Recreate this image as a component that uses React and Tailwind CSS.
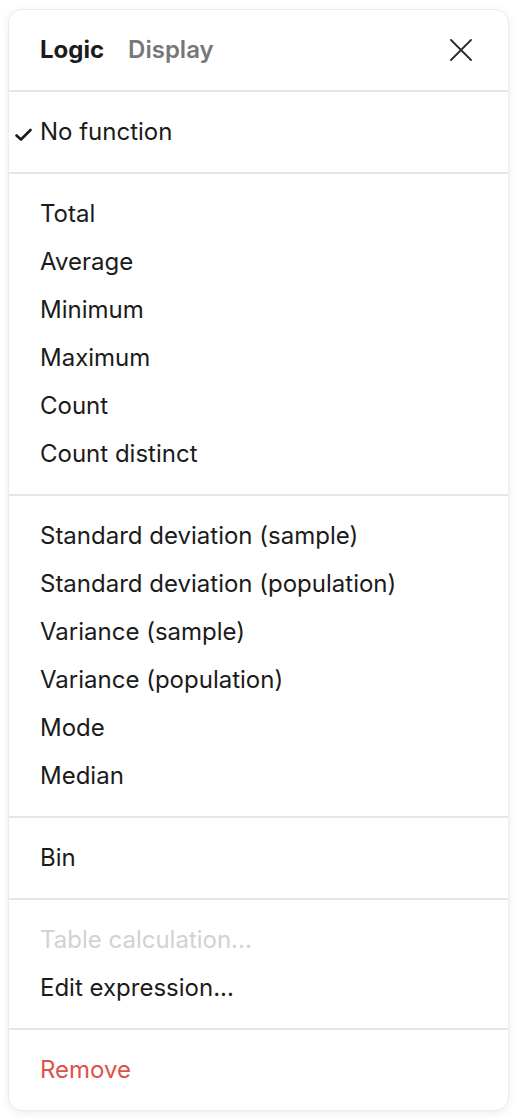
import React from 'react';

const sections = [
  ['Total', 'Average', 'Minimum', 'Maximum', 'Count', 'Count distinct'],
  [
    'Standard deviation (sample)',
    'Standard deviation (population)',
    'Variance (sample)',
    'Variance (population)',
    'Mode',
    'Median',
  ],
  ['Bin'],
];

const Row = ({ children, className = 'text-[#1b1b1b]', check }) => (
  <div className={`relative h-12 flex items-center pl-[31px] ${className}`}>
    {check && (
      <svg
        className="absolute left-[6px] top-[20px]"
        width="17"
        height="14"
        viewBox="0 0 17 14"
        fill="none"
      >
        <path d="M1.5 7.5L6 11.5L15.5 2" stroke="#1b1b1b" strokeWidth="2.6" strokeLinecap="round" strokeLinejoin="round" />
      </svg>
    )}
    {children}
  </div>
);

const Section = ({ children }) => (
  <div className="py-4 border-t-2 border-[#e6e6e6]">{children}</div>
);

export default function App() {
  return (
    <div className="min-h-screen bg-white pt-[9px] pl-2 pr-[15px] font-['Inter','Liberation_Sans',sans-serif] text-[24px]">
      <div className="w-[501px] bg-white border border-[#ececec] rounded-[14px] shadow-[0_2px_8px_rgba(0,0,0,0.08)] overflow-hidden">
        <div className="h-[80px] flex items-center pl-[31px] pr-[36px]">
          <div className="flex items-center gap-6 flex-1">
            <span className="font-bold text-[#1b1b1b]">Logic</span>
            <span className="font-semibold text-[#777777]">Display</span>
          </div>
          <svg width="22" height="22" viewBox="0 0 22 22" fill="none">
            <path d="M1 1l20 20M21 1L1 21" stroke="#2a2a2a" strokeWidth="1.8" strokeLinecap="round" />
          </svg>
        </div>
        <Section>
          <Row check>No function</Row>
        </Section>
        {sections.map((items, i) => (
          <Section key={i}>
            {items.map((item) => (
              <Row key={item}>{item}</Row>
            ))}
          </Section>
        ))}
        <Section>
          <Row className="text-[#d2d2d2]">Table calculation...</Row>
          <Row>Edit expression...</Row>
        </Section>
        <Section>
          <Row className="text-[#e0514a]">Remove</Row>
        </Section>
      </div>
    </div>
  );
}
